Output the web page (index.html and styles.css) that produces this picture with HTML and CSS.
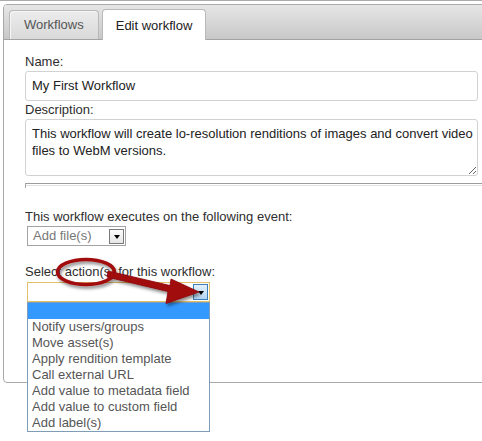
FILE: index.html
```
<!DOCTYPE html>
<html>
<head>
<meta charset="utf-8">
<link rel="stylesheet" href="styles.css">
</head>
<body>
<div class="topline"></div>
<div class="panel">
  <div class="tabbar">
    <div class="tab">Workflows</div>
    <div class="tab active">Edit workflow</div>
  </div>
  <div class="content">
    <div class="label">Name:</div>
    <div class="input">My First Workflow</div>
    <div class="label">Description:</div>
    <textarea class="textarea" readonly>This workflow will create lo-resolution renditions of images and convert video
files to WebM versions.</textarea>
    <div class="sep"></div>
    <div class="label gap-lg">This workflow executes on the following event:</div>
    <div class="select small">
      <span class="sel-text">Add file(s)</span>
      <span class="btn"><span class="tri"></span></span>
    </div>
    <div class="label gap-md">Select action(s) for this workflow:</div>
    <div class="select-wrap">
      <div class="select wide focus">
        <span class="sel-text"></span>
        <span class="btn blue"><span class="tri"></span></span>
      </div>
      <ul class="list">
        <li class="hl">&nbsp;</li>
        <li>Notify users/groups</li>
        <li>Move asset(s)</li>
        <li>Apply rendition template</li>
        <li>Call external URL</li>
        <li>Add value to metadata field</li>
        <li>Add value to custom field</li>
        <li>Add label(s)</li>
      </ul>
    </div>
  </div>
</div>
<svg class="annot" width="482" height="441" viewBox="0 0 482 441">
  <defs>
    <filter id="sh" x="-20%" y="-40%" width="140%" height="180%">
      <feDropShadow dx="1.5" dy="2.5" stdDeviation="1.6" flood-color="#000" flood-opacity="0.45"/>
    </filter>
  </defs>
  <g filter="url(#sh)">
    <ellipse cx="86" cy="272" rx="28.5" ry="12.5" fill="none" stroke="#a10b0e" stroke-width="3.5"/>
    <polygon points="108,271 170,285.5 171,279 199,292 166,303.5 168,291.5 107,277" fill="#a10b0e" stroke="#8a0508" stroke-width="0.8" stroke-linejoin="round"/>
  </g>
</svg>
</body>
</html>
```
FILE: styles.css
```
html, body {
  margin: 0;
  padding: 0;
  overflow: hidden;
  background: #fff;
}
body {
  font-family: "Liberation Sans", Arial, sans-serif;
  font-size: 13px;
  color: #2e2e2e;
  width: 482px;
  height: 441px;
  position: relative;
}
.topline {
  height: 1px;
  background: #ababab;
}
.panel {
  margin: 3px 0 0 3px;
  width: 500px;
  border: 1px solid #a9a9a9;
  border-radius: 4px;
  background: #fff;
}
.tabbar {
  height: 34px;
  display: flex;
  align-items: flex-end;
  gap: 3px;
  padding-left: 5px;
  border-bottom: 1px solid #a3a3a3;
  border-radius: 3px 3px 0 0;
  background: linear-gradient(#e6e6e6, #c8c8c8);
}
.tab {
  height: 28px;
  line-height: 28px;
  padding: 0 14px;
  border: 1px solid #b9b9b9;
  border-bottom: none;
  border-radius: 4px 4px 0 0;
  background: linear-gradient(#ececec, #d9d9d9);
  color: #555;
  box-shadow: inset 1px 1px 0 #f6f6f6;
}
.tab.active {
  height: 30px;
  line-height: 31px;
  margin-bottom: -1px;
  padding: 0 13px;
  background: #fff;
  color: #222;
  box-shadow: none;
}
.content {
  padding: 14px 0 80px 21px;
}
.label {
  line-height: 16px;
  margin-top: 1px;
}
.content > .label:first-child {
  margin-top: 0;
}
.gap-lg { margin-top: 21px; }
.gap-md { margin-top: 18px; }
.input {
  box-sizing: border-box;
  width: 453px;
  height: 30px;
  margin-top: 1px;
  padding: 0 6px;
  line-height: 28px;
  border: 1px solid #d2d2d2;
  border-radius: 3px;
  color: #222;
}
.textarea {
  display: block;
  box-sizing: border-box;
  width: 453px;
  height: 57px;
  margin: 1px 0 0 0;
  padding: 5px 2px 5px 6px;
  font-family: "Liberation Sans", Arial, sans-serif;
  font-size: 13px;
  line-height: 17px;
  color: #222;
  border: 1px solid #d2d2d2;
  border-radius: 3px;
  outline: none;
  overflow: hidden;
  white-space: pre;
  background: #fff;
}
.sep {
  margin-top: 7px;
  height: 4px;
  border-top: 1px solid #9c9c9c;
  border-left: 1px solid #a6a6a6;
}
.sep::before {
  content: "";
  display: block;
  height: 1px;
  margin-top: 1px;
  background: #e2e2e2;
}
.select {
  box-sizing: border-box;
  display: flex;
  align-items: center;
  justify-content: space-between;
  margin: 1px 0 0 2px;
  border: 1px solid #a3a3a3;
  background: #fff;
}
.select.small {
  width: 99px;
  height: 20px;
  padding: 0 1px 0 5px;
  color: #777;
}
.select-wrap {
  position: relative;
  margin: 2px 0 0 2px;
  width: 183px;
}
.select.wide {
  margin: 0;
  width: 183px;
  height: 20px;
  padding: 0 1px 0 5px;
}
.select.focus {
  border-color: #e3bf67;
}
.sel-text {
  line-height: 18px;
}
.btn {
  box-sizing: border-box;
  width: 15px;
  height: 15px;
  display: flex;
  align-items: center;
  justify-content: center;
  border: 1px solid #7a7a7a;
  background: linear-gradient(#fcfcfc, #e6e6e6);
}
.btn.blue {
  height: 16px;
  border-color: #3d7fb8;
  background: linear-gradient(#e3f1fc, #b3d5f1);
}
.tri {
  width: 0;
  height: 0;
  border-left: 3.5px solid transparent;
  border-right: 3.5px solid transparent;
  border-top: 4px solid #000;
  margin-top: 1px;
}
.list {
  position: absolute;
  left: 0;
  top: 20px;
  box-sizing: border-box;
  width: 183px;
  margin: 0;
  padding: 0;
  list-style: none;
  border: 1px solid #7f9db9;
  background: #fff;
  color: #555;
}
.list li {
  height: 16px;
  line-height: 16px;
  padding-left: 4px;
  white-space: nowrap;
}
.list li.hl {
  background: #3399ff;
}
.annot {
  position: absolute;
  left: 0;
  top: 0;
  pointer-events: none;
}
```
